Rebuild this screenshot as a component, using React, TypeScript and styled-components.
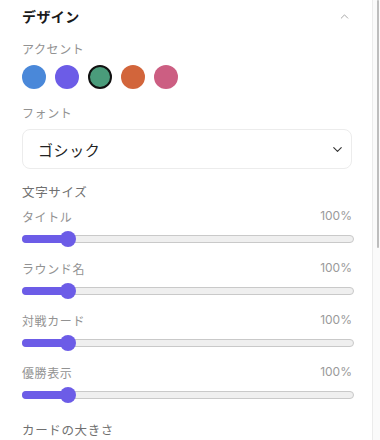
import React from "react";
import styled, { createGlobalStyle } from "styled-components";
import { ChevronUp, ChevronDown } from "lucide-react";

const GlobalStyle = createGlobalStyle`
  html, body {
    margin: 0;
    padding: 0;
    background: #fff;
  }
  * {
    box-sizing: border-box;
  }
`;

const Frame = styled.div`
  height: 440px;
  width: 380px;
  display: flex;
  overflow: hidden;
  font-family: "Inter", "Noto Sans CJK JP", sans-serif;
  color: #222;
`;

const Panel = styled.div`
  flex: 1;
  min-width: 0;
  padding: 0 20px 0 22px;
`;

// thin scrollbar rail on the right edge of the sidebar
const Rail = styled.div`
  width: 8px;
  flex-shrink: 0;
  background: #fafafa;
  border-left: 1px solid #ebebeb;
  display: flex;
  justify-content: flex-end;
  padding-right: 1px;
`;

const RailThumb = styled.div`
  width: 2px;
  height: 248px;
  border-radius: 1px;
  background: #bdbdbd;
`;

const Header = styled.div`
  height: 32px;
  display: flex;
  align-items: center;
  justify-content: space-between;
  padding-right: 1px;
`;

const Heading = styled.h2`
  margin: 0;
  font-size: 14px;
  font-weight: 700;
  color: #1a1a1a;
  letter-spacing: 0.03em;
`;

const Collapse = styled.button`
  border: 0;
  background: transparent;
  padding: 0;
  display: flex;
  color: #9a9a9a;
  cursor: pointer;
`;

const Label = styled.div<{ $tone?: "strong" | "soft"; $gap?: number }>`
  font-size: ${(p) => (p.$tone === "strong" ? "12.5px" : "12px")};
  line-height: 18px;
  color: ${(p) => (p.$tone === "strong" ? "#707070" : "#929292")};
  margin-top: ${(p) => p.$gap ?? 0}px;
  letter-spacing: 0.05em;
`;

const Swatches = styled.div`
  display: flex;
  gap: 9px;
  margin-top: 6px;
`;

const Swatch = styled.button<{ $color: string; $active?: boolean }>`
  width: 24px;
  height: 24px;
  border-radius: 50%;
  padding: 0;
  background: ${(p) => p.$color};
  border: ${(p) => (p.$active ? "2px solid #111" : "0")};
  cursor: pointer;
`;

const SelectBox = styled.div`
  margin-top: 6px;
  height: 40px;
  border: 1px solid #ececec;
  border-radius: 8px;
  display: flex;
  align-items: center;
  justify-content: space-between;
  padding: 0 6px 0 15px;
  font-size: 15px;
  color: #222;
  letter-spacing: 0.04em;
`;

const SliderRow = styled.div<{ $gap: number }>`
  margin-top: ${(p) => p.$gap}px;
`;

const RowHead = styled.div`
  display: flex;
  justify-content: space-between;
  align-items: center;
`;

const Value = styled.span`
  font-size: 12px;
  line-height: 14px;
  color: #9a9a9a;
  margin-top: -4px;
`;

const SliderBox = styled.div`
  position: relative;
  height: 16px;
  margin-top: 4px;
  margin-right: -2px;
  display: flex;
  align-items: center;
`;

const Track = styled.div`
  position: relative;
  width: 100%;
  height: 8px;
  border-radius: 4px;
  background: #efefef;
  border: 1px solid #c9c9c9;
`;

const Fill = styled.div`
  position: absolute;
  left: -1px;
  top: -1px;
  bottom: -1px;
  border-radius: 4px;
  background: #6c5ce7;
`;

const Thumb = styled.div`
  position: absolute;
  top: 0;
  width: 16px;
  height: 16px;
  border-radius: 50%;
  background: #6c5ce7;
`;

const swatches = ["#4a88d9", "#6c5ce7", "#4a9c7b", "#d2653b", "#cc5e82"];

const Slider = ({ label, min, max, value, gap }: { label: string; min: number; max: number; value: number; gap: number }) => {
  const frac = (value - min) / (max - min);
  const pos = `calc(8px + ${frac} * (100% - 16px))`;
  return (
    <SliderRow $gap={gap}>
      <RowHead>
        <Label>{label}</Label>
        <Value>{value}%</Value>
      </RowHead>
      <SliderBox>
        <Track>
          <Fill style={{ width: pos }} />
        </Track>
        <Thumb style={{ left: `calc(${pos} - 8px)` }} />
      </SliderBox>
    </SliderRow>
  );
};

export default function App() {
  return (
    <>
      <GlobalStyle />
      <Frame>
        <Panel>
          <Header>
            <Heading>デザイン</Heading>
            <Collapse aria-label="折りたたむ">
              <ChevronUp size={13} strokeWidth={1.6} />
            </Collapse>
          </Header>

          <Label $gap={9}>アクセント</Label>
          <Swatches>
            {swatches.map((c, i) => (
              <Swatch key={c} $color={c} $active={i === 2} aria-label={c} />
            ))}
          </Swatches>

          <Label $gap={16}>フォント</Label>
          <SelectBox>
            <span>ゴシック</span>
            <ChevronDown size={15} strokeWidth={1.8} color="#333" />
          </SelectBox>

          <Label $tone="strong" $gap={15}>文字サイズ</Label>
          <Slider label="タイトル" min={70} max={320} value={100} gap={7} />
          <Slider label="ラウンド名" min={70} max={320} value={100} gap={14} />
          <Slider label="対戦カード" min={70} max={320} value={100} gap={14} />
          <Slider label="優勝表示" min={70} max={320} value={100} gap={14} />

          <Label $tone="strong" $gap={19}>カードの大きさ</Label>
        </Panel>
        <Rail>
          <RailThumb />
        </Rail>
      </Frame>
    </>
  );
}
